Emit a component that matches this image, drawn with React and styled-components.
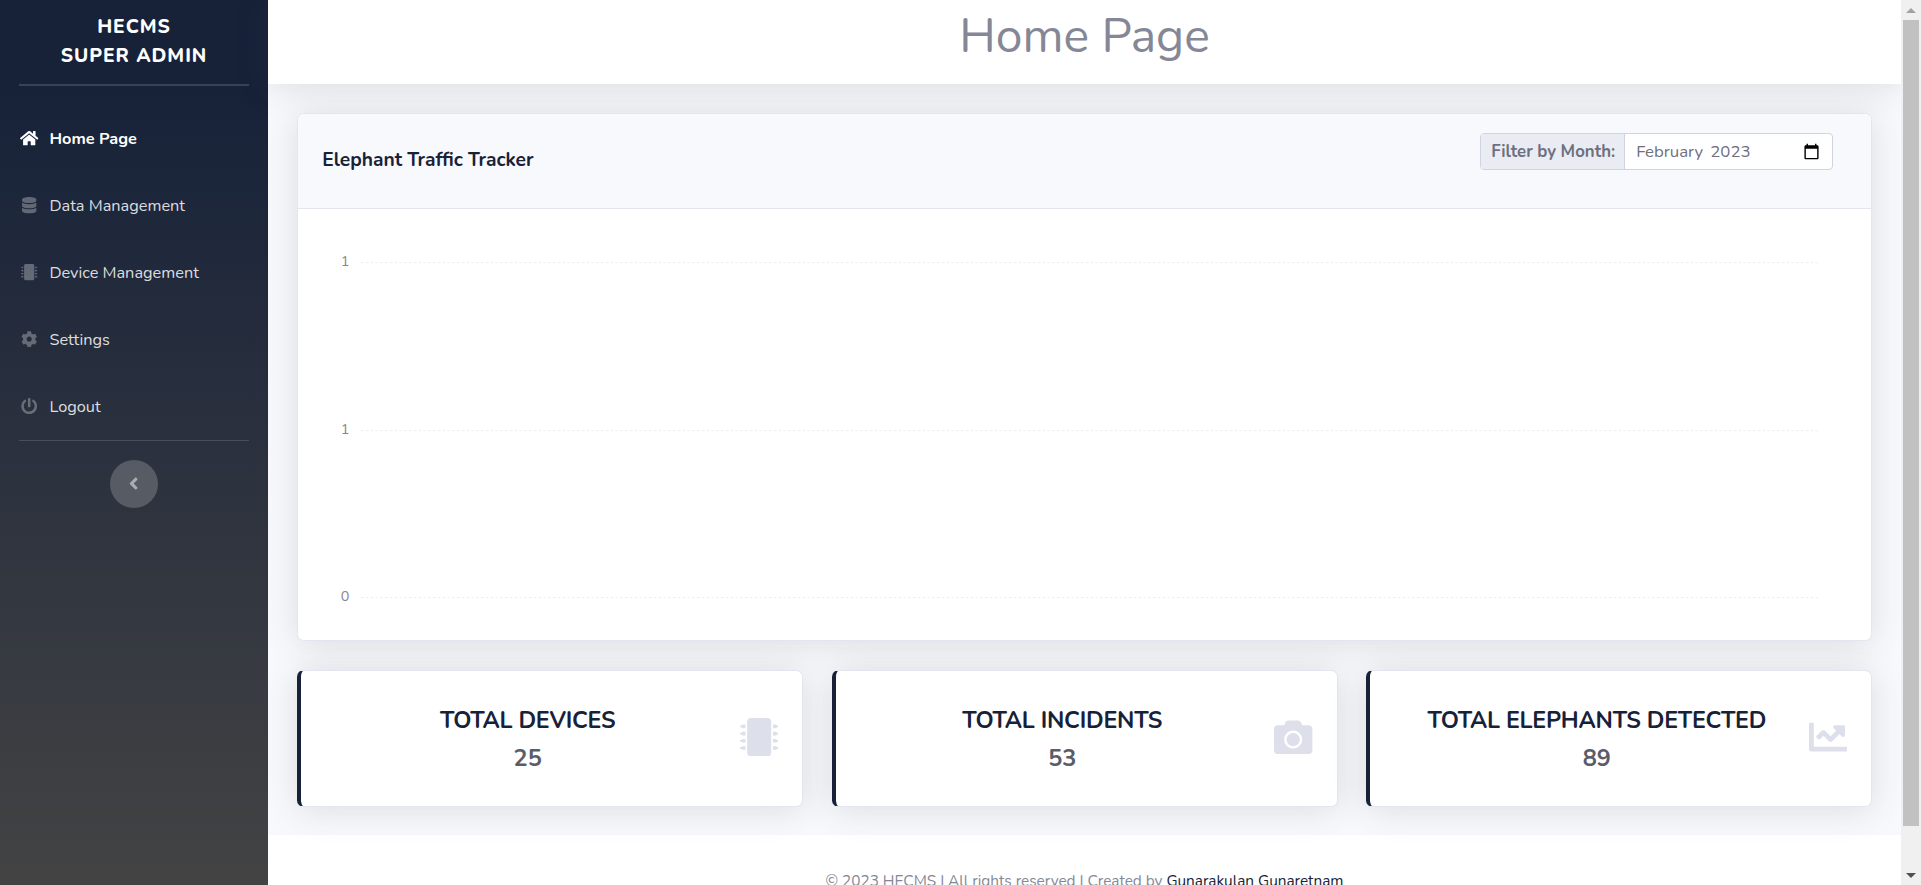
import React from 'react';
import styled, { createGlobalStyle } from 'styled-components';
import {
  FaAngleLeft,
  FaCamera,
  FaChartLine,
  FaCog,
  FaDatabase,
  FaHome,
  FaMicrochip,
  FaPowerOff,
} from 'react-icons/fa';

const GlobalStyle = createGlobalStyle`
  *, *::before, *::after { box-sizing: border-box; }
  html, body { margin: 0; height: 100%; overflow: hidden; }
  body {
    font-family: Nunito, Lato, "Open Sans", sans-serif;
    font-size: 19.2px;
    line-height: 1.5;
    color: #858796;
    background: #fff;
  }
`;

const Page = styled.div`
  display: flex;
  height: 885px;
  overflow: hidden;
`;

const Sidebar = styled.nav`
  flex: none;
  width: 268px;
  height: 934px;
  display: flex;
  flex-direction: column;
  background: linear-gradient(180deg, #172239 10%, #444 97%);
`;

const Brand = styled.div`
  height: 84px;
  text-align: center;
  font-size: 19.2px;
  font-weight: 800;
  line-height: 28.8px;
  letter-spacing: 0.96px;
  color: #fff;
  padding-top: 13px;
`;

const Divider = styled.hr`
  width: 230px;
  height: ${(p) => p.$size}px;
  margin: 0 auto;
  border: 0;
  background: rgba(255, 255, 255, 0.15);
`;

const NavList = styled.ul`
  list-style: none;
  margin: 0;
  padding: 19px 0 0;
  height: 354px;
`;

const NavItem = styled.li`
  height: 67px;
  padding: 0 19px;
  display: flex;
  align-items: center;
  gap: 10px;
  font-size: 16.32px;
  font-weight: ${(p) => (p.$active ? 700 : 400)};
  color: ${(p) => (p.$active ? '#fff' : 'rgba(255, 255, 255, 0.85)')};

  span {
    padding-top: 2px;
  }

  svg {
    width: 20.4px;
    height: 16.32px;
    color: ${(p) => (p.$active ? '#fff' : 'rgba(255, 255, 255, 0.3)')};
  }
`;

const Toggle = styled.button`
  width: 48px;
  height: 48px;
  margin: 19px auto 0;
  padding: 0;
  border: 0;
  border-radius: 50%;
  display: flex;
  align-items: center;
  justify-content: center;
  background: rgba(255, 255, 255, 0.2);
  color: rgba(255, 255, 255, 0.5);
  font-size: 19.2px;
`;

const Content = styled.div`
  flex: 1;
  min-width: 0;
  height: 934px;
  display: flex;
  flex-direction: column;
  background: #f8f9fc;
`;

const Topbar = styled.header`
  flex: none;
  height: 84px;
  display: flex;
  justify-content: center;
  background: #fff;
  box-shadow: 0 2.9px 33.6px rgba(58, 59, 69, 0.15);
`;

const PageTitle = styled.h1`
  margin: 8px 0 0;
  font-size: 48px;
  font-weight: 400;
  line-height: 57.6px;
`;

const Main = styled.main`
  padding: 28.8px 28.8px 28.8px 29.3px;
  display: flex;
  flex-direction: column;
  gap: 28.8px;
`;

const Card = styled.section`
  position: relative;
  background: #fff;
  border: 1px solid #e3e6f0;
  border-radius: 6.7px;
  box-shadow: 0 2.9px 33.6px rgba(58, 59, 69, 0.15);
`;

const ChartCard = styled(Card)`
  height: 528px;
`;

const CardHeader = styled.div`
  height: 95px;
  padding: 0 38px 0 24px;
  display: flex;
  justify-content: space-between;
  background: #f8f9fc;
  border-bottom: 1px solid #e3e6f0;
  border-radius: 5.7px 5.7px 0 0;
`;

const CardTitle = styled.h6`
  margin: 35px 0 0;
  font-size: 19.2px;
  font-weight: 700;
  line-height: 23px;
  color: #172238;
`;

const MonthFilter = styled.div`
  margin-top: 19px;
  height: 37px;
  width: 353px;
  display: flex;
  border: 1px solid #d1d3e2;
  border-radius: 4px;
  background: #fff;
  overflow: hidden;
  font-size: 16.8px;
  line-height: 35px;
  color: #6e707e;
`;

const FilterLabel = styled.span`
  width: 144px;
  padding-left: 10px;
  font-weight: 700;
  white-space: nowrap;
  background: #eaecf4;
  border-right: 1px solid #d1d3e2;
`;

const FilterValue = styled.span`
  flex: 1;
  padding: 0 12px 0 11px;
  display: flex;
  align-items: center;
  justify-content: space-between;
  color: #6e707e;
`;

const MonthText = styled.span`
  display: flex;
  gap: 7px;
`;

const ChartArea = styled.svg`
  display: block;
  width: 1525px;
  height: 384px;
  margin: 24px 0 0 24px;
`;

const Stats = styled.div`
  display: grid;
  grid-template-columns: repeat(3, 1fr);
  gap: 28.8px;
`;

const StatCard = styled(Card)`
  height: 137px;
  padding: 0 24px 2px;
  display: flex;
  align-items: center;
  border-left: 4px solid #172238;
`;

const StatText = styled.div`
  flex: 1;
  margin-right: 9.6px;
  padding-top: 5px;
  text-align: center;
  font-size: 24px;
  font-weight: 700;
  white-space: nowrap;
`;

const StatLabel = styled.div`
  font-size: 23.2px;
  line-height: 36px;
  letter-spacing: -0.22px;
  color: #172238;
`;

const StatValue = styled.div`
  font-size: 23.5px;
  line-height: 38px;
  color: #5a5c69;
`;

const StatIcon = styled.span`
  display: flex;
  font-size: 38.4px;
  color: #dddfeb;
`;

const Footer = styled.footer`
  flex: 1;
  padding-top: 38px;
  text-align: center;
  font-size: 15.36px;
  line-height: 15.36px;
  letter-spacing: -0.02px;
  background: #fff;
`;

const Author = styled.a`
  color: #172238;
`;

const ScrollTrack = styled.div`
  flex: none;
  width: 20px;
  height: 885px;
  padding: 8px 0 7px;
  display: flex;
  flex-direction: column;
  align-items: center;
  justify-content: space-between;
  background: #f0f0f0;
`;

const Thumb = styled.div`
  width: 16px;
  height: 806px;
  margin: 7px 0 auto;
  background: #c1c1c1;
`;

const Arrow = styled.div`
  border: 5px solid transparent;
  ${(p) =>
    p.$up
      ? 'border-top: 0; border-bottom: 5px solid #a3a3a3;'
      : 'border-bottom: 0; border-top: 5px solid #505050;'}
`;

const navItems = [
  ['Home Page', FaHome],
  ['Data Management', FaDatabase],
  ['Device Management', FaMicrochip],
  ['Settings', FaCog],
  ['Logout', FaPowerOff],
];

const stats = [
  ['TOTAL DEVICES', '25', FaMicrochip],
  ['TOTAL INCIDENTS', '53', FaCamera],
  ['TOTAL ELEPHANTS DETECTED', '89', FaChartLine],
];

const ticks = [
  { y: 29.7, label: '1' },
  { y: 197.7, label: '1' },
  { y: 364.7, label: '0' },
];

function CalendarIcon() {
  return (
    <svg width="17" height="17" viewBox="0 0 24 24" fill="#000">
      <path d="M20 3h-1V1h-2v2H7V1H5v2H4c-1.1 0-2 .9-2 2v16c0 1.1.9 2 2 2h16c1.1 0 2-.9 2-2V5c0-1.1-.9-2-2-2zm0 18H4V8h16v13z" />
    </svg>
  );
}

export default function App() {
  return (
    <Page>
      <GlobalStyle />
      <Sidebar>
        <Brand>
          HECMS
          <br />
          SUPER ADMIN
        </Brand>
        <Divider $size={2} />
        <NavList>
          {navItems.map(([label, Icon], i) => (
            <NavItem key={label} $active={i === 0}>
              <Icon />
              <span>{label}</span>
            </NavItem>
          ))}
        </NavList>
        <Divider $size={1} />
        <Toggle aria-label="Collapse sidebar">
          <FaAngleLeft />
        </Toggle>
      </Sidebar>

      <Content>
        <Topbar>
          <PageTitle>Home Page</PageTitle>
        </Topbar>
        <Main>
          <ChartCard>
            <CardHeader>
              <CardTitle>Elephant Traffic Tracker</CardTitle>
              <MonthFilter>
                <FilterLabel>Filter by Month:</FilterLabel>
                <FilterValue>
                  <MonthText>
                    <span>February</span>
                    <span>2023</span>
                  </MonthText>
                  <CalendarIcon />
                </FilterValue>
              </MonthFilter>
            </CardHeader>
            <ChartArea viewBox="0 0 1525 384">
              {ticks.map(({ y, label }) => (
                <g key={y}>
                  <text x="27.5" y={y + 3.5} textAnchor="end" fontSize="14.4" fill="#858796">
                    {label}
                  </text>
                  <line
                    x1="39"
                    x2="1496"
                    y1={y}
                    y2={y}
                    stroke="#eaecf4"
                    strokeDasharray="2.4 2.4"
                  />
                </g>
              ))}
            </ChartArea>
          </ChartCard>
          <Stats>
            {stats.map(([label, value, Icon]) => (
              <StatCard key={label}>
                <StatText>
                  <StatLabel>{label}</StatLabel>
                  <StatValue>{value}</StatValue>
                </StatText>
                <StatIcon>
                  <Icon />
                </StatIcon>
              </StatCard>
            ))}
          </Stats>
        </Main>
        <Footer>
          © 2023 HECMS | All rights reserved | Created by <Author>Gunarakulan Gunaretnam</Author>
        </Footer>
      </Content>

      <ScrollTrack>
        <Arrow $up />
        <Thumb />
        <Arrow />
      </ScrollTrack>
    </Page>
  );
}
